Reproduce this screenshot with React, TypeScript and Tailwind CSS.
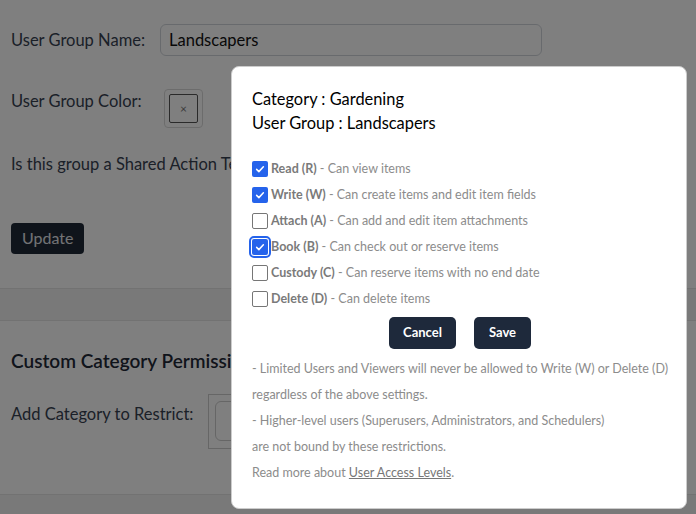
import React from 'react';

const font = { fontFamily: 'Lato, "Noto Sans", sans-serif' };

const perms = [
  { name: 'Read (R)', desc: 'Can view items', checked: true },
  { name: 'Write (W)', desc: 'Can create items and edit item fields', checked: true },
  { name: 'Attach (A)', desc: 'Can add and edit item attachments', checked: false },
  { name: 'Book (B)', desc: 'Can check out or reserve items', checked: true, focused: true },
  { name: 'Custody (C)', desc: 'Can reserve items with no end date', checked: false },
  { name: 'Delete (D)', desc: 'Can delete items', checked: false },
];

const Box = ({ checked, focused }: { checked: boolean; focused?: boolean }) => (
  <span
    className={`flex h-[16px] w-[16px] shrink-0 items-center justify-center rounded-[2px] ${
      checked ? 'bg-[#2563eb]' : 'border border-[#767676] bg-white'
    } ${focused ? 'outline-2 outline-offset-1 outline-[#2563eb]' : ''}`}
  >
    {checked && (
      <svg viewBox="0 0 16 16" className="h-[12px] w-[12px]">
        <path d="M3.5 8.5l3 3 6-6.5" fill="none" stroke="white" strokeWidth="2" strokeLinecap="round" strokeLinejoin="round" />
      </svg>
    )}
  </span>
);

const App = () => {
  return (
    <div className="relative h-[514px] w-[696px] overflow-hidden bg-white text-[#374151]" style={font}>
      {/* page */}
      <div className="h-[289px] px-[11px] pt-[24px] border-b border-[#e5e5e5]">
        <div className="flex items-center">
          <span className="w-[149px] text-[16.5px]">User Group Name:</span>
          <div className="flex h-[32px] w-[382px] items-center rounded-[6px] border border-[#d1d5db] px-[8px] text-[16.5px] text-[#111]">
            Landscapers
          </div>
        </div>
        <div className="mt-[33px] flex items-start">
          <span className="w-[153px] text-[16.5px]">User Group Color:</span>
          <div className="flex h-[39px] w-[39px] items-center justify-center rounded-[4px] border border-[#d9d9d9]">
            <div className="flex h-[29px] w-[29px] items-center justify-center rounded-[2px] border border-[#555] text-[12px] text-[#777]">
              ×
            </div>
          </div>
        </div>
        <div className="mt-[24px] text-[16.5px]">Is this group a Shared Action Team?</div>
        <button className="mt-[46px] h-[31px] rounded-[4px] bg-[#1f2937] px-[11px] text-[16px] text-[#e5e7eb]">Update</button>
      </div>
      <div className="h-[31px] bg-[#f3f3f3]" />
      <div className="h-[175px] border-y border-[#e5e5e5] px-[11px] pt-[26px]">
        <div className="text-[19px] font-semibold text-[#1f2937]">Custom Category Permissions</div>
        <div className="mt-[18px] flex items-start">
          <span className="mt-[8px] w-[197px] text-[16.5px]">Add Category to Restrict:</span>
          <div className="flex h-[55px] w-[120px] items-center border border-[#ccc] pl-[6px]">
            <div className="h-[40px] w-full rounded-[6px] border border-[#ccc]" />
          </div>
        </div>
      </div>
      <div className="h-[30px] bg-[#f3f3f3]" />

      {/* overlay */}
      <div className="absolute inset-0 bg-black/50" />

      {/* modal */}
      <div className="absolute left-[231px] top-[66px] h-[443px] w-[456px] rounded-[8px] border border-[#ccc] bg-white px-[20px] pt-[20px]">
        <div className="text-[16.4px] leading-[24px] text-black">
          <div>Category : Gardening</div>
          <div>User Group : Landscapers</div>
        </div>
        <div className="mt-[21px] flex flex-col">
          {perms.map((p) => (
            <label key={p.name} className="flex h-[26px] items-center gap-[3px] whitespace-nowrap text-[12.5px]">
              <Box checked={p.checked} focused={p.focused} />
              <span>
                <span className="font-bold text-[#7a7a7a]">{p.name}</span>
                <span className="text-[#8c8c8c]"> - {p.desc}</span>
              </span>
            </label>
          ))}
        </div>
        <div className="mt-[5px] flex justify-center gap-[18px] pl-[2px]">
          <button className="h-[32px] w-[67px] rounded-[5px] bg-[#1e293b] text-[13px] font-bold text-white">Cancel</button>
          <button className="h-[32px] w-[57px] rounded-[5px] bg-[#1e293b] text-[13px] font-bold text-white">Save</button>
        </div>
        <div className="mt-[7px] whitespace-nowrap text-[12.5px] leading-[26px] text-[#8c8c8c]">
          <div>- Limited Users and Viewers will never be allowed to Write (W) or Delete (D)</div>
          <div>regardless of the above settings.</div>
          <div>- Higher-level users (Superusers, Administrators, and Schedulers)</div>
          <div>are not bound by these restrictions.</div>
          <div>
            Read more about <a className="underline text-[#777]">User Access Levels</a>.
          </div>
        </div>
      </div>
    </div>
  );
};

export default App;
